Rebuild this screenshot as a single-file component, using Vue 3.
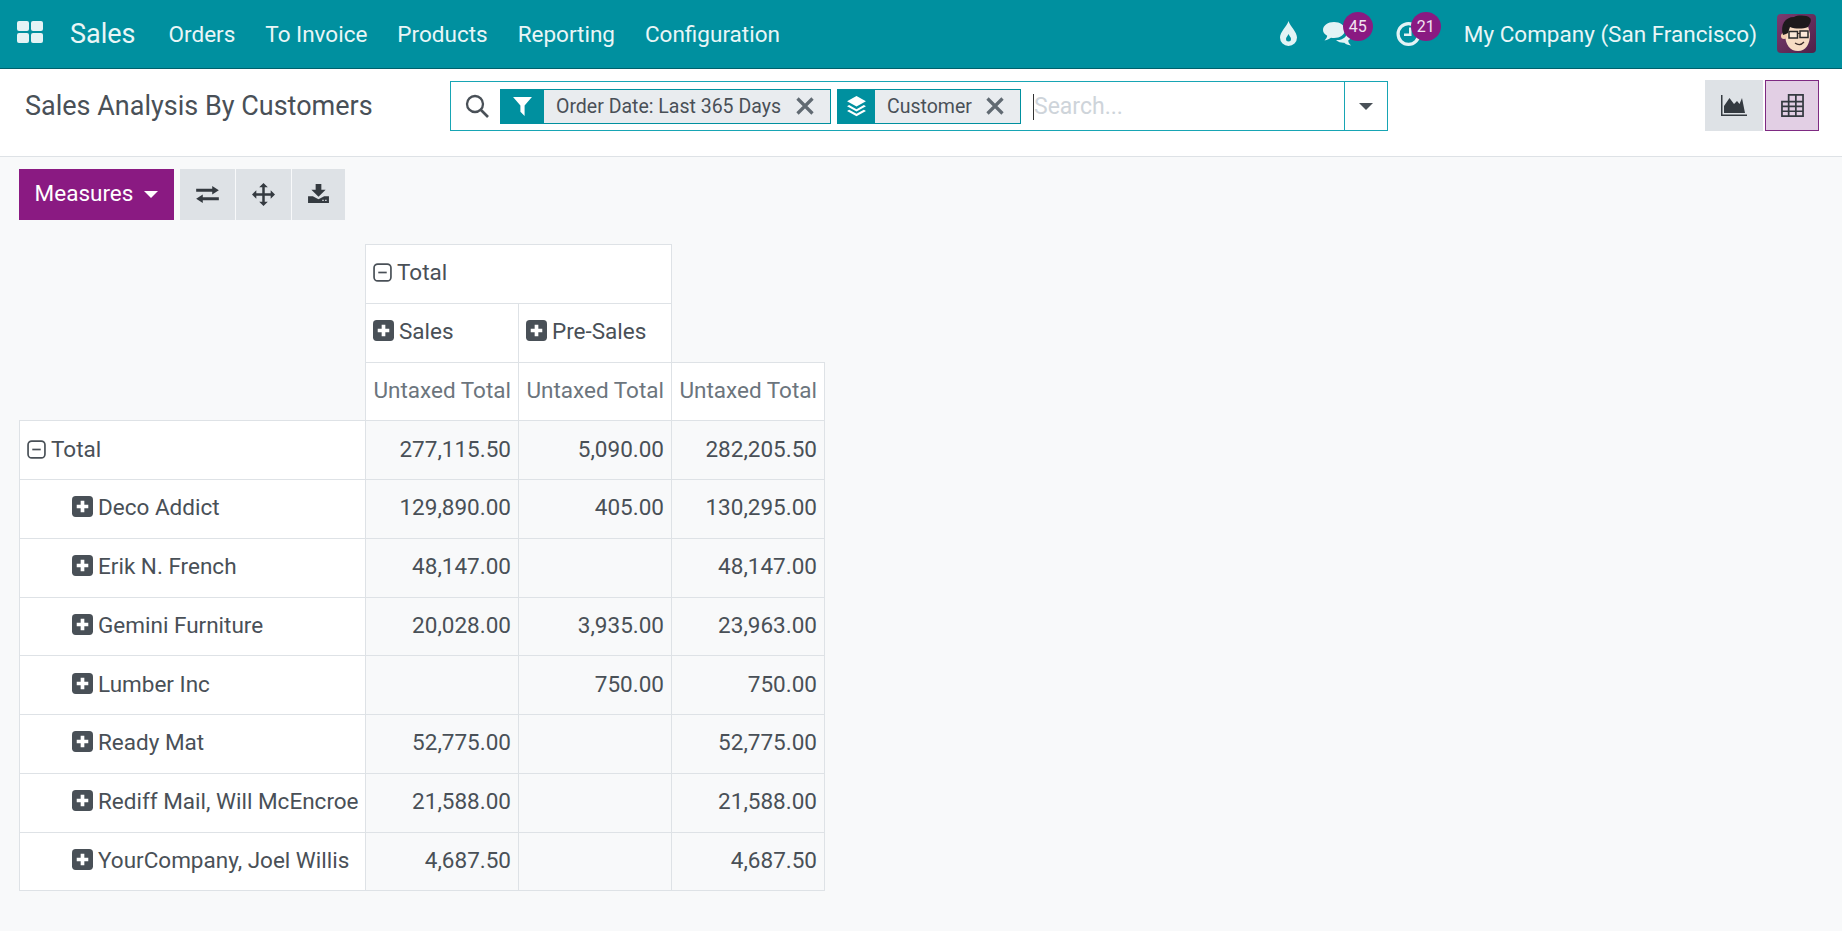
<script setup>
const nav = ['Orders', 'To Invoice', 'Products', 'Reporting', 'Configuration']
const rows = [
  { name: 'Deco Addict', a: '129,890.00', b: '405.00', c: '130,295.00' },
  { name: 'Erik N. French', a: '48,147.00', b: '', c: '48,147.00' },
  { name: 'Gemini Furniture', a: '20,028.00', b: '3,935.00', c: '23,963.00' },
  { name: 'Lumber Inc', a: '', b: '750.00', c: '750.00' },
  { name: 'Ready Mat', a: '52,775.00', b: '', c: '52,775.00' },
  { name: 'Rediff Mail, Will McEncroe', a: '21,588.00', b: '', c: '21,588.00' },
  { name: 'YourCompany, Joel Willis', a: '4,687.50', b: '', c: '4,687.50' }
]
</script>

<template>
  <div class="page">
    <header class="navbar">
      <svg class="apps" viewBox="0 0 26 22"><rect x="0" y="0" width="12" height="10" rx="2"/><rect x="14" y="0" width="12" height="10" rx="2"/><rect x="0" y="12" width="12" height="10" rx="2"/><rect x="14" y="12" width="12" height="10" rx="2"/></svg>
      <span class="brand">Sales</span>
      <nav class="menu"><a v-for="n in nav" :key="n">{{ n }}</a></nav>
      <div class="systray">
        <svg class="drop" viewBox="0 0 17 25"><path fill-rule="evenodd" d="M8.500 0C10 5 17 11 17 16.500A8.500 8.500 0 0 1 0 16.500C0 11 7 5 8.500 0ZM8.500 13C7.500 15 6 16.500 6 18a2.500 2.500 0 0 0 5 0C11 16.500 9.500 15 8.500 13Z"/></svg>
        <div class="tray-item chat">
          <svg viewBox="0 0 29 24"><path d="M11 0C17 0 22 3.500 22 8S17 16 11 16C10 16 9 16 8 15.800C6.500 17 4.500 18 1.500 18.500C3 17 4 15.500 4.200 13.800C1.600 12.300 0 10.300 0 8C0 3.500 5 0 11 0Z"/><path d="M24 7.500C26.800 9 28.500 11 28.500 13.400C28.500 15.500 27.300 17.200 25.200 18.500C25.400 20.500 26.500 22 28 23.500C25 23 22.600 22 21.300 20.700C19 20.900 15.500 20.500 13 18C19 18.500 25.500 15 24 7.500Z"/></svg>
          <span class="badge">45</span>
        </div>
        <div class="tray-item clock">
          <svg viewBox="0 0 25 24"><circle class="ring" cx="12.500" cy="12" r="10.400"/><path d="M13 5.500h2.500v8.500H8v-2.500h5Z"/></svg>
          <span class="badge">21</span>
        </div>
        <span class="company">My Company (San Francisco)</span>
        <svg class="avatar" viewBox="0 0 39 39">
          <defs><linearGradient id="avbg" x1="0" y1="0" x2="1" y2="1"><stop offset="0" stop-color="#7c3b70"/><stop offset="1" stop-color="#4f2148"/></linearGradient></defs>
          <rect width="39" height="39" rx="4" fill="url(#avbg)"/>
          <path d="M8 19c0 12 5 18 13 18s12-7 12-17l-2-8H11Z" fill="#f7dcc4"/>
          <circle cx="7" cy="22" r="3" fill="#f2cdb0"/>
          <path d="M6 21C3 11 8 3 17 3c4-2 13-2 16 1 2 2 0 6-2 9-5 2-13 2-18 0l-2 6-2 1Z" fill="#1d1a1c"/>
          <rect x="12" y="17.500" width="8.500" height="6.500" fill="#fff" fill-opacity=".35" stroke="#2a2a2a" stroke-width="1.500"/>
          <rect x="23" y="17" width="8" height="6.500" fill="#fff" fill-opacity=".35" stroke="#2a2a2a" stroke-width="1.500"/>
          <path d="M20.500 19.500h2.500M18 29q5 3.500 9-1" fill="none" stroke="#3a2a28" stroke-width="1.200"/>
        </svg>
      </div>
    </header>

    <section class="panel">
      <h1 class="title">Sales Analysis By Customers</h1>
      <div class="search">
        <svg class="loupe" viewBox="0 0 24 24"><circle cx="10" cy="10" r="8" fill="none" stroke-width="2.300"/><path d="M15.500 15.500 23 23" fill="none" stroke-width="2.600"/></svg>
        <div class="chip first">
          <span class="chip-icon wide"><svg viewBox="0 0 20 20"><path d="M1 1h18l-7 8v10l-4-4V9Z"/></svg></span>
          <span class="chip-label">Order Date: Last 365 Days</span>
          <svg class="chip-x" viewBox="0 0 16 16"><path d="M2 2 14 14M14 2 2 14"/></svg>
        </div>
        <div class="chip second">
          <span class="chip-icon"><svg viewBox="0 0 20 20"><path d="M10 0 19 5 10 10 1 5Z"/><path d="M3 8.500 10 12.500 17 8.500 19 9.700 10 14.700 1 9.700ZM3 13 10 17 17 13 19 14.200 10 19.200 1 14.200Z"/></svg></span>
          <span class="chip-label">Customer</span>
          <svg class="chip-x" viewBox="0 0 16 16"><path d="M2 2 14 14M14 2 2 14"/></svg>
        </div>
        <div class="input"><span class="caret"></span>Search...</div>
        <div class="search-toggle"><span class="tri dark"></span></div>
      </div>
      <div class="switch">
        <button class="sw">
          <svg viewBox="0 0 26 22"><path d="M0 0h1.500v19.500H26V21H0Z"/><path d="M3 18V11L8.500 3 13 9 16 6 18.500 9 21 3 24 18Z"/></svg>
        </button>
        <button class="sw active">
          <svg viewBox="0 0 24 24"><path d="M8 1H23V23H1V8H8ZM8 8H23M1 13H23M1 18H23M8 1V23M15.500 1V23" fill="none" stroke-width="1.800"/></svg>
        </button>
      </div>
    </section>

    <main class="content">
      <div class="toolbar">
        <button class="measures">Measures<span class="tri"></span></button>
        <div class="tools">
          <button class="tool"><svg class="ex" viewBox="0 0 24 18"><path d="M0 3h17V0l7 4.500-7 4.500V6H0ZM24 12H7V9l-7 4.500L7 18v-3h17Z"/></svg></button>
          <button class="tool"><svg class="mv" viewBox="0 0 24 24"><path d="M12 0 16.500 4.500H13.300V10.700H19.500V7.500L24 12 19.500 16.500V13.300H13.300V19.500H16.500L12 24 7.500 19.500H10.700V13.300H4.500V16.500L0 12 4.500 7.500V10.700H10.700V4.500H7.500Z"/></svg></button>
          <button class="tool"><svg class="dl" viewBox="0 0 22 20"><path d="M8 0h6v6h4.500L11 13.500 3.500 6H8Z"/><path fill-rule="evenodd" d="M0 13h5l6 3 6-3h5v7H0ZM15 16.500v1.300h1.500v-1.300ZM18 16.500v1.300h1.500v-1.300Z"/></svg></button>
        </div>
      </div>

      <table class="pivot">
        <colgroup><col class="c0"><col class="cn"><col class="cn"><col class="cn"></colgroup>
        <thead>
          <tr>
            <th class="blank" rowspan="3"></th>
            <th class="head" colspan="2"><svg class="minus" viewBox="0 0 18 18"><rect x="1" y="1" width="16" height="16" rx="3.500"/><path d="M5 9h8"/></svg><span class="gap-m">Total</span></th>
            <th class="blank" rowspan="2"></th>
          </tr>
          <tr>
            <th class="head"><svg class="plus" viewBox="0 0 20 20"><rect width="20" height="20" rx="3.500"/><path d="M10 4.500v11M4.500 10h11"/></svg><span class="gap-p">Sales</span></th>
            <th class="head"><svg class="plus" viewBox="0 0 20 20"><rect width="20" height="20" rx="3.500"/><path d="M10 4.500v11M4.500 10h11"/></svg><span class="gap-p">Pre-Sales</span></th>
          </tr>
          <tr>
            <th class="measure">Untaxed Total</th>
            <th class="measure">Untaxed Total</th>
            <th class="measure">Untaxed Total</th>
          </tr>
        </thead>
        <tbody>
          <tr>
            <th class="row-head"><svg class="minus" viewBox="0 0 18 18"><rect x="1" y="1" width="16" height="16" rx="3.500"/><path d="M5 9h8"/></svg><span class="gap-m">Total</span></th>
            <td>277,115.50</td><td>5,090.00</td><td>282,205.50</td>
          </tr>
          <tr v-for="r in rows" :key="r.name">
            <th class="row-head sub"><svg class="plus" viewBox="0 0 20 20"><rect width="20" height="20" rx="3.500"/><path d="M10 4.500v11M4.500 10h11"/></svg><span class="gap-p">{{ r.name }}</span></th>
            <td>{{ r.a }}</td><td>{{ r.b }}</td><td>{{ r.c }}</td>
          </tr>
        </tbody>
      </table>
    </main>
  </div>
</template>

<style>
html, body { margin: 0; background: #f8f9fa; }
</style>

<style scoped>
.page { width: 1842px; height: 931px; overflow: hidden; background: #f8f9fa; color: #495057; font-family: Roboto, "Liberation Sans", sans-serif; font-size: 22.500px; }
button { border: 0; padding: 0; font-family: inherit; cursor: pointer; }

.navbar { display: flex; align-items: center; box-sizing: border-box; height: 69px; background: #00909f; border-bottom: 1px solid #00606b; color: #e9f6f7; padding: 0 26px 0 17px; }
.apps { width: 26px; height: 22px; fill: #e4f3f5; margin-top: -4px; }
.brand { font-size: 27px; margin-left: 27px; }
.menu { display: flex; gap: 30px; margin-left: 33px; }
.systray { display: flex; align-items: center; margin-left: auto; }
.drop { width: 17px; height: 25px; fill: #e4f3f5; margin-right: 26px; margin-top: -2px; }
.tray-item { position: relative; display: flex; }
.tray-item svg { fill: #e4f3f5; }
.chat svg { width: 29px; height: 24px; }
.clock { margin-left: 44px; }
.clock svg { width: 25px; height: 24px; }
.ring { fill: none; stroke: #e4f3f5; stroke-width: 3.200; }
.badge { position: absolute; left: 20px; top: -10px; width: 30px; height: 29px; border-radius: 50%; background: #8a1a82; color: #f2e4f1; font-size: 16px; display: flex; align-items: center; justify-content: center; }
.clock .badge { left: 15px; }
.company { margin-left: 43px; }
.avatar { width: 39px; height: 39px; margin-left: 20px; margin-top: -1px; }

.panel { display: flex; align-items: flex-start; box-sizing: border-box; height: 88px; background: #fff; border-bottom: 1px solid #dee2e6; padding: 12px 23px 0 25px; }
.title { width: 425px; margin: 0; font-size: 27px; line-height: 50px; font-weight: 400; color: #495057; }
.search { display: flex; align-items: center; box-sizing: border-box; width: 938px; height: 50px; background: #fff; border: 1px solid #17a5b4; position: relative; padding-left: 14px; }
.loupe { width: 24px; height: 24px; stroke: #495057; margin-right: 11px; }
.chip { display: flex; align-items: center; box-sizing: border-box; height: 35px; background: #e9ecef; border: 1px solid #00909f; border-left: 0; }
.first { width: 331px; }
.second { width: 184px; margin-left: 6px; }
.chip-icon { display: flex; align-items: center; justify-content: center; align-self: stretch; width: 38px; margin-top: -1px; margin-bottom: -1px; background: #00909f; }
.chip-icon.wide { width: 44px; }
.chip-icon svg { width: 21px; height: 21px; fill: #fff; }
.chip-label { font-size: 19.500px; margin-left: 12px; color: #495057; white-space: nowrap; }
.chip-x { width: 20px; height: 20px; margin-left: auto; margin-right: 15px; stroke: #616a72; stroke-width: 2.600; fill: none; }
.input { display: flex; align-items: center; color: #ced4da; font-size: 23px; margin-left: 12px; flex: 1; padding-top: 1px; }
.caret { width: 1px; height: 26px; background: #333; margin-right: 0; }
.search-toggle { display: flex; align-items: center; justify-content: center; align-self: stretch; width: 42px; border-left: 1px solid #17a5b4; }
.tri { display: inline-block; width: 0; height: 0; border-left: 7px solid transparent; border-right: 7px solid transparent; border-top: 7px solid #fff; margin-left: 11px; vertical-align: 3px; }
.tri.dark { border-top-color: #495057; margin: 0; }
.switch { display: flex; margin-left: auto; height: 51px; gap: 2px; margin-top: -1px; }
.sw { box-sizing: border-box; width: 58px; height: 51px; background: #dee2e6; display: flex; align-items: center; justify-content: center; }
.sw svg { width: 26px; height: 22px; fill: #343a40; }
.sw.active { width: 54px; background: #e2cfe4; border: 1px solid #7e2a82; }
.sw.active svg { width: 23px; height: 23px; stroke: #343a40; fill: none; }

.content { padding: 12px 0 0 19px; }
.toolbar { display: flex; }
.measures { width: 155px; height: 51px; background: #8a1a82; color: #fff; font-size: 22.500px; padding-bottom: 4px; }
.tools { display: flex; gap: 1px; margin-left: 6px; }
.tool { width: 55px; height: 51px; background: #dee2e6; display: flex; align-items: center; justify-content: center; }
.tool:last-child { width: 53px; }
.tool svg { fill: #343a40; }
.ex { width: 23px; height: 17px; }
.mv { width: 23px; height: 23px; }
.dl { width: 21px; height: 19px; margin-top: -3px; }

.pivot { border-collapse: collapse; table-layout: fixed; width: 805px; margin-top: 24px; }
.c0 { width: 346px; }
.cn { width: 153px; }
.pivot th, .pivot td { height: 58.750px; box-sizing: border-box; border: 1px solid #dee2e6; font-weight: 400; padding: 0 7px 3px 7px; white-space: nowrap; text-align: left; }
.pivot th.blank { border: none; background: transparent; }
.head, .row-head { background: #fff; }
.head { color: #495057; }
.measure { background: #fff; color: #6c757d; }
.pivot th.measure { text-align: right; }
.pivot td { text-align: right; background: #f8f9fa; }
.pivot th.row-head.sub { padding-left: 52px; }
.minus, .plus { display: inline-block; vertical-align: -2px; }
.minus { width: 19px; height: 19px; fill: none; stroke: #495057; stroke-width: 1.600; }
.plus { width: 21px; height: 21px; fill: #495057; }
.plus path { stroke: #fff; stroke-width: 3.500; fill: none; }
.gap-m { margin-left: 5px; }
.gap-p { margin-left: 5px; }
</style>
